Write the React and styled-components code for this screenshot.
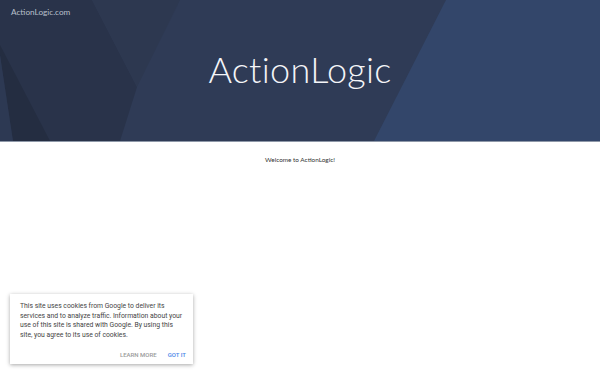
import React from "react";
import styled, { createGlobalStyle } from "styled-components";

const GlobalStyle = createGlobalStyle`
  html, body {
    margin: 0;
    padding: 0;
    background: #ffffff;
  }
  body {
    font-family: Lato, "Liberation Sans", sans-serif;
  }
`;

const Page = styled.div`
  width: 600px;
  height: 375px;
  position: relative;
  overflow: hidden;
  background: #ffffff;
`;

const Header = styled.header`
  position: relative;
  height: 141px;
  border-bottom: 1px solid #8e98a8;
  background: #2f3b56;
  display: flex;
  align-items: center;
  justify-content: center;
  overflow: hidden;
`;

const Facets = styled.svg`
  position: absolute;
  inset: 0;
  width: 100%;
  height: 100%;
`;

const SiteLink = styled.a`
  position: absolute;
  top: 7px;
  left: 11px;
  font-family: Lato, "Liberation Sans", sans-serif;
  font-size: 8.2px;
  color: #b9c0cc;
  text-decoration: none;
`;

const Title = styled.h1`
  position: relative;
  margin: 0 0 4px;
  font-family: Lato, "Liberation Sans", sans-serif;
  font-weight: 300;
  font-size: 36px;
  color: #f4f5f8;
  letter-spacing: 0.3px;
`;

const Main = styled.main`
  display: flex;
  justify-content: center;
  padding-top: 14px;
`;

const Welcome = styled.p`
  margin: 0;
  font-family: Lato, "Liberation Sans", sans-serif;
  font-size: 6.4px;
  color: #333333;
`;

const CookieCard = styled.div`
  position: absolute;
  left: 10px;
  top: 294px;
  width: 183px;
  box-sizing: border-box;
  padding: 8px 7px 6px 10px;
  background: #ffffff;
  box-shadow: 0 1px 4px rgba(0, 0, 0, 0.35);
  font-family: Roboto, "Liberation Sans", sans-serif;
`;

const CookieText = styled.p`
  margin: 0;
  font-size: 6.8px;
  line-height: 9.6px;
  color: #444444;
`;

const Actions = styled.div`
  display: flex;
  justify-content: flex-end;
  gap: 11px;
  margin-top: 11px;
`;

const ActionButton = styled.span`
  font-family: Roboto, "Liberation Sans", sans-serif;
  font-size: 6px;
  font-weight: 500;
  text-transform: uppercase;
  color: ${({ $primary }) => ($primary ? "#4a86e8" : "#9a9a9a")};
`;

export default function App() {
  return (
    <Page>
      <GlobalStyle />
      <Header>
        <Facets viewBox="0 0 600 141" preserveAspectRatio="none">
          <polygon points="0,0 92,0 137,87 120,141 0,141" fill="#29334a" />
          <polygon points="92,0 180,0 137,87" fill="#2d3850" />
          <polygon points="0,45 50,141 13,141 0,55" fill="#242d41" />
          <polygon points="0,55 13,141 0,141" fill="#2d3953" />
          <polygon points="446,0 600,0 600,141 374,141" fill="#33466a" />
        </Facets>
        <SiteLink>ActionLogic.com</SiteLink>
        <Title>ActionLogic</Title>
      </Header>
      <Main>
        <Welcome>Welcome to ActionLogic!</Welcome>
      </Main>
      <CookieCard>
        <CookieText>
          This site uses cookies from Google to deliver its services and to
          analyze traffic. Information about your use of this site is shared
          with Google. By using this site, you agree to its use of cookies.
        </CookieText>
        <Actions>
          <ActionButton>Learn more</ActionButton>
          <ActionButton $primary>Got it</ActionButton>
        </Actions>
      </CookieCard>
    </Page>
  );
}
